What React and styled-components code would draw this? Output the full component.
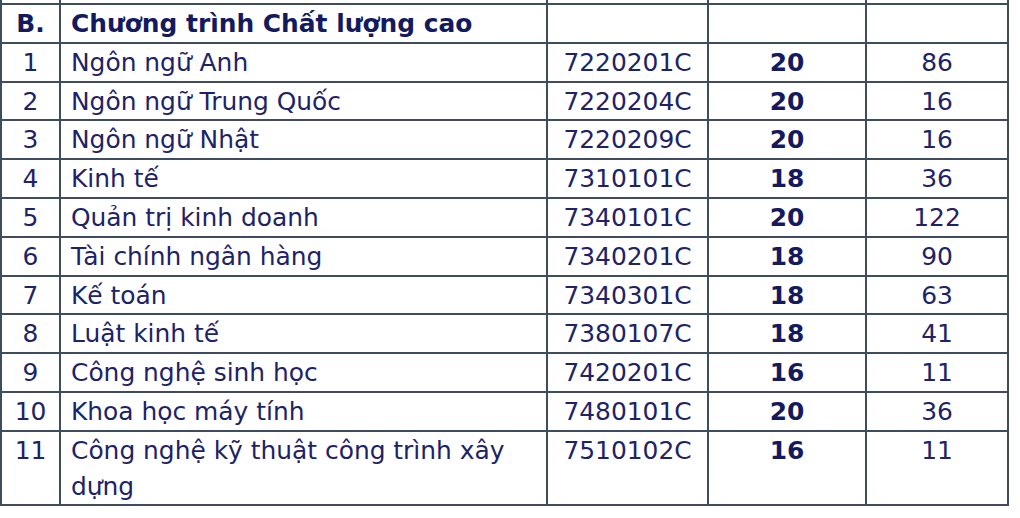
import React from "react";
import styled, { createGlobalStyle } from "styled-components";

const Global = createGlobalStyle`
  html, body { margin: 0; padding: 0; background: #ffffff; }
  body { font-family: "DejaVu Sans", Verdana, sans-serif; }
`;

const Table = styled.table`
  border-collapse: collapse;
  table-layout: fixed;
  width: 1009px;
  font-family: "DejaVu Sans", Verdana, sans-serif;
  font-size: 24.9px;
  color: #1d2366;
`;

const Cell = styled.td`
  border: 2px solid #3f4c60;
  border-top: ${(p) => (p.$cut ? "none" : "2px solid #3f4c60")};
  padding: ${(p) => (p.$cut ? "0" : "1px 10px 0")};
  height: ${(p) => (p.$cut ? "3px" : "auto")};
  line-height: 35.8px;
  vertical-align: top;
  text-align: ${(p) => p.$align || "center"};
  font-weight: ${(p) => (p.$bold ? 700 : 400)};
  color: ${(p) => (p.$bold ? "#141a5e" : "#1d2366")};
  white-space: ${(p) => (p.$wrap ? "normal" : "nowrap")};
`;

const rows = [
  ["1", "Ngôn ngữ Anh", "7220201C", "20", "86"],
  ["2", "Ngôn ngữ Trung Quốc", "7220204C", "20", "16"],
  ["3", "Ngôn ngữ Nhật", "7220209C", "20", "16"],
  ["4", "Kinh tế", "7310101C", "18", "36"],
  ["5", "Quản trị kinh doanh", "7340101C", "20", "122"],
  ["6", "Tài chính ngân hàng", "7340201C", "18", "90"],
  ["7", "Kế toán", "7340301C", "18", "63"],
  ["8", "Luật kinh tế", "7380107C", "18", "41"],
  ["9", "Công nghệ sinh học", "7420201C", "16", "11"],
  ["10", "Khoa học máy tính", "7480101C", "20", "36"],
  ["11", "Công nghệ kỹ thuật công trình xây dựng", "7510102C", "16", "11"],
];

export default function App() {
  return (
    <>
      <Global />
      <Table>
        <colgroup>
          <col style={{ width: 59 }} />
          <col style={{ width: 487 }} />
          <col style={{ width: 161 }} />
          <col style={{ width: 158 }} />
          <col style={{ width: 142 }} />
        </colgroup>
        <tbody>
          <tr>
            <Cell $cut />
            <Cell $cut />
            <Cell $cut />
            <Cell $cut />
            <Cell $cut />
          </tr>
          <tr>
            <Cell $bold>B.</Cell>
            <Cell $bold $align="left">Chương trình Chất lượng cao</Cell>
            <Cell />
            <Cell />
            <Cell />
          </tr>
          {rows.map((r) => (
            <tr key={r[0]}>
              <Cell>{r[0]}</Cell>
              <Cell $align="left" $wrap>{r[1]}</Cell>
              <Cell>{r[2]}</Cell>
              <Cell $bold>{r[3]}</Cell>
              <Cell>{r[4]}</Cell>
            </tr>
          ))}
        </tbody>
      </Table>
    </>
  );
}
